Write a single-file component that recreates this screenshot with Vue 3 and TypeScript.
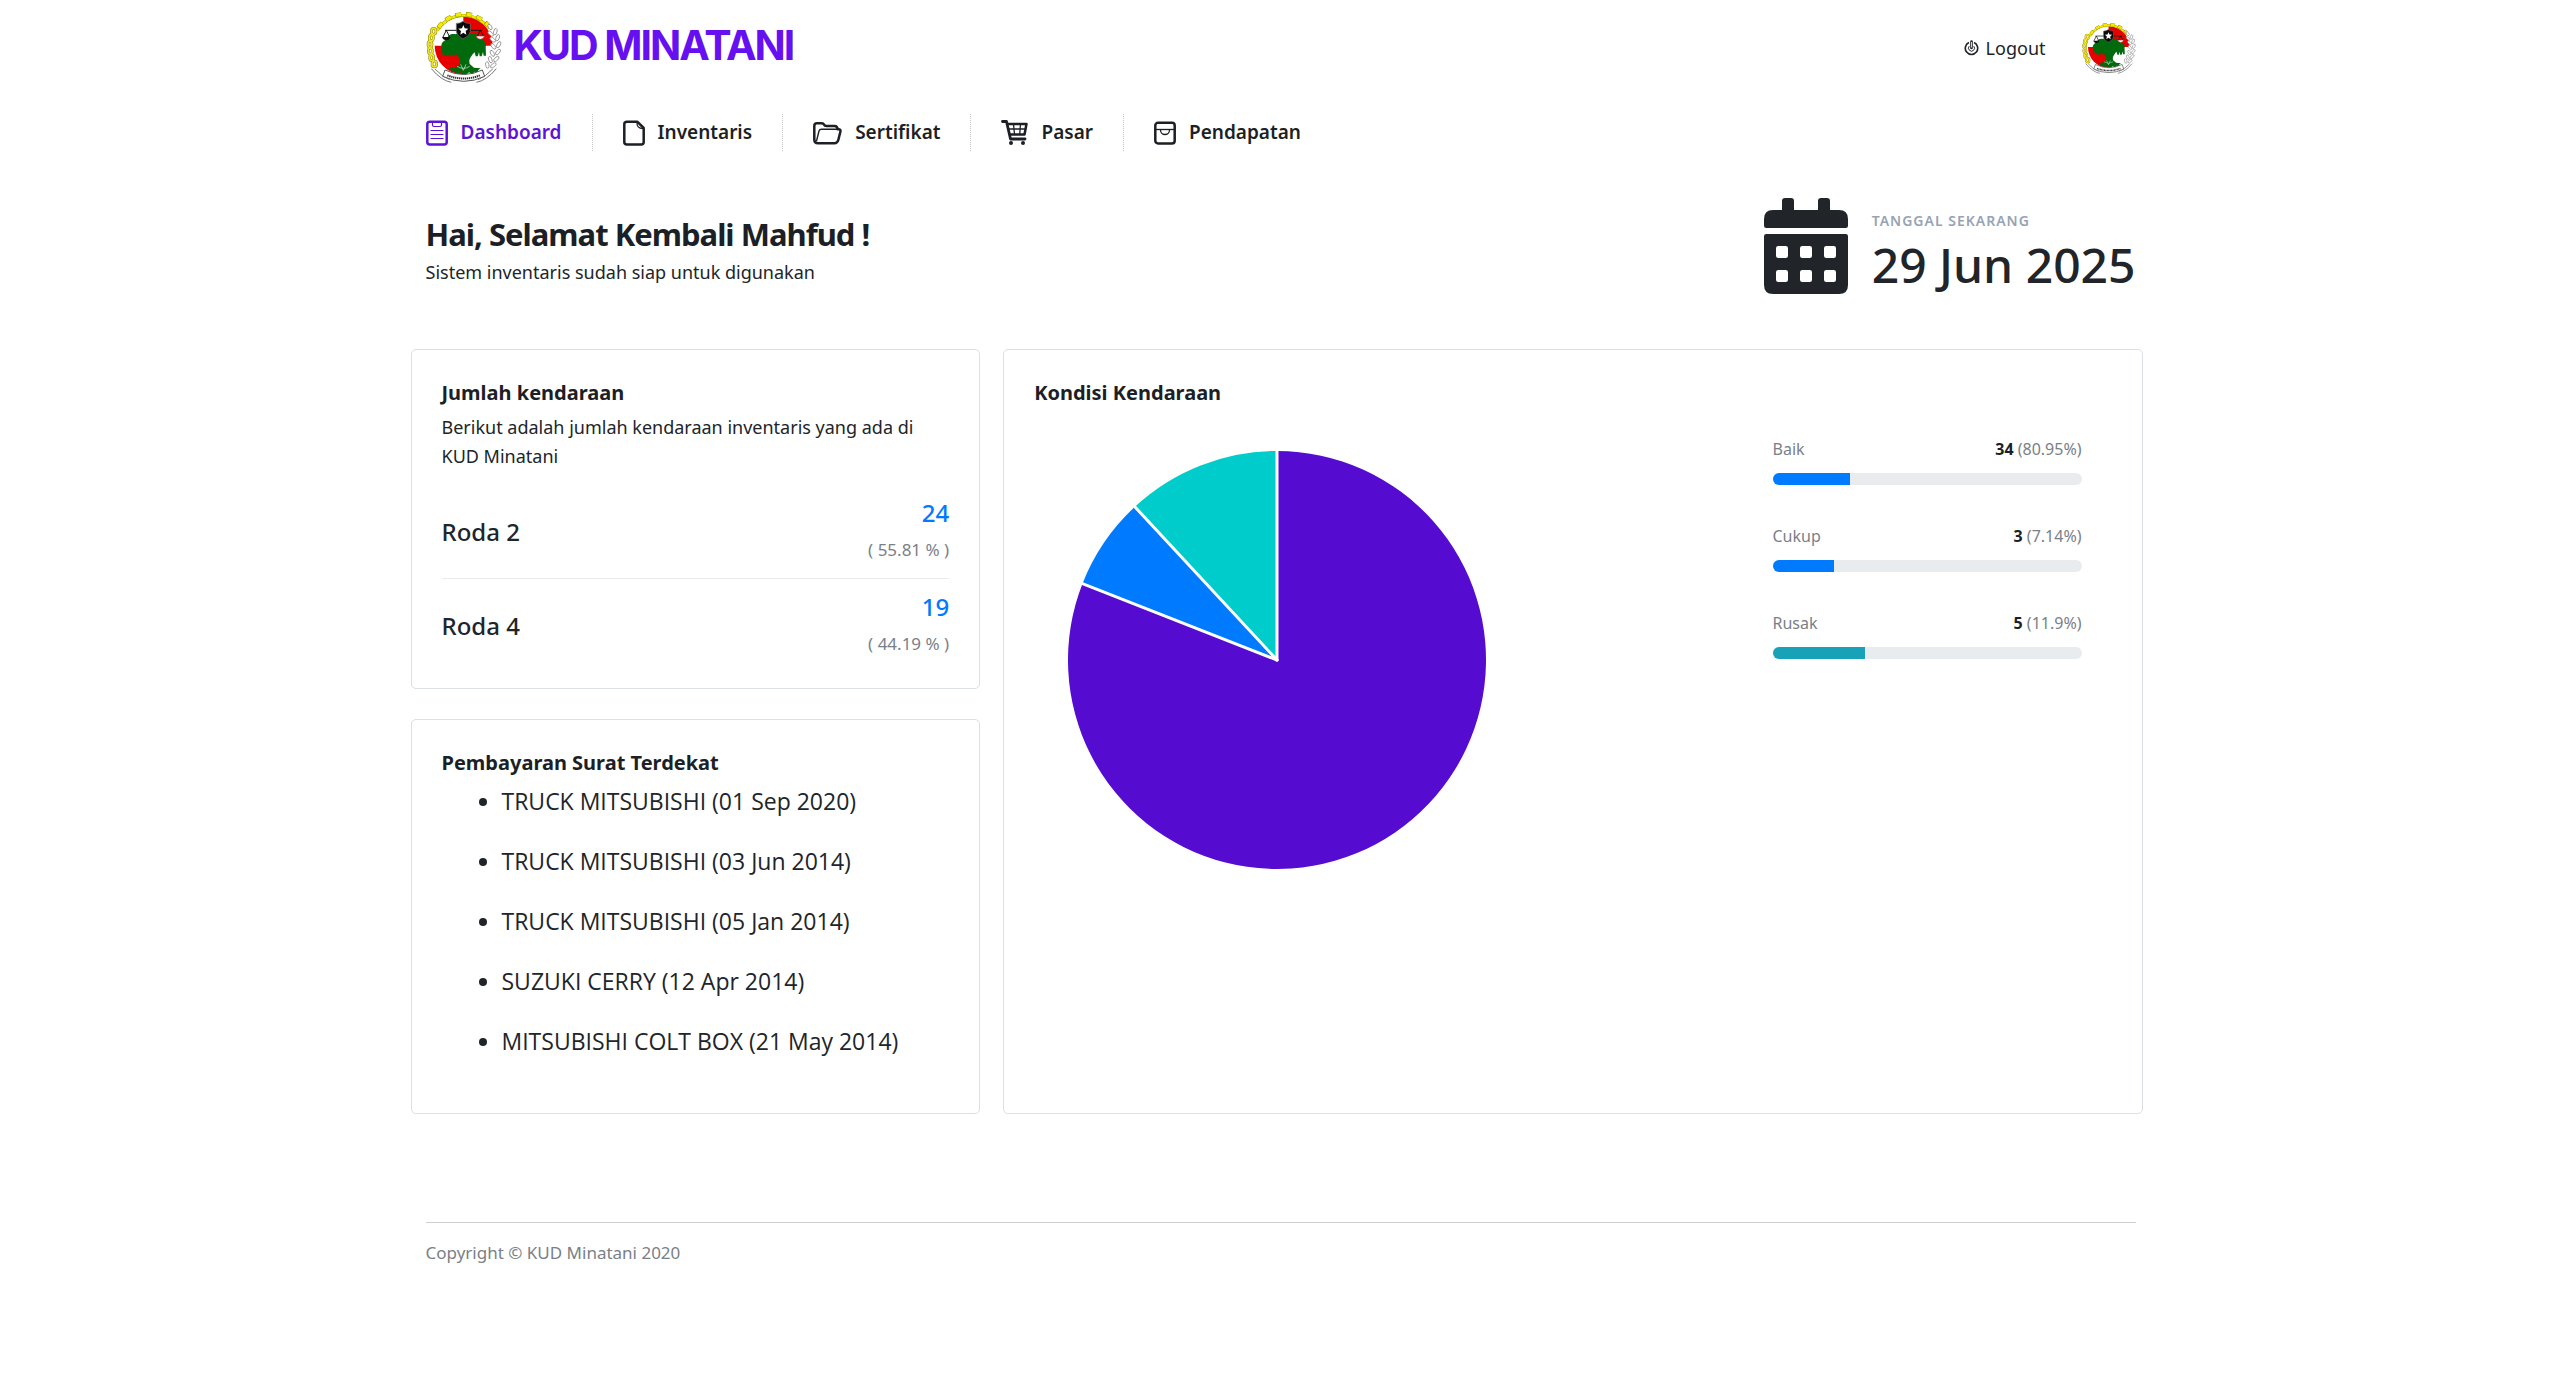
<script setup lang="ts">
interface NavItem {
  label: string
  icon: string
  width: number
  active?: boolean
}

interface Condition {
  label: string
  total: number
  percent: string
  bar: number
  barColor: string
  sliceColor: string
}

const navItems: NavItem[] = [
  { label: 'Dashboard', icon: 'clipboard', width: 22, active: true },
  { label: 'Inventaris', icon: 'document', width: 22 },
  { label: 'Sertifikat', icon: 'folder', width: 29 },
  { label: 'Pasar', icon: 'cart', width: 27 },
  { label: 'Pendapatan', icon: 'archive', width: 22 },
]

const vehicles = [
  { label: 'Roda 2', total: 24, percent: '55.81' },
  { label: 'Roda 4', total: 19, percent: '44.19' },
]

const payments: string[] = [
  'TRUCK MITSUBISHI (01 Sep 2020)',
  'TRUCK MITSUBISHI (03 Jun 2014)',
  'TRUCK MITSUBISHI (05 Jan 2014)',
  'SUZUKI CERRY (12 Apr 2014)',
  'MITSUBISHI COLT BOX (21 May 2014)',
]

const conditions: Condition[] = [
  { label: 'Baik', total: 34, percent: '80.95%', bar: 25, barColor: '#007bff', sliceColor: '#560bd0' },
  { label: 'Cukup', total: 3, percent: '7.14%', bar: 20, barColor: '#007bff', sliceColor: '#007bff' },
  { label: 'Rusak', total: 5, percent: '11.9%', bar: 30, barColor: '#17a2b8', sliceColor: '#00cccc' },
]

const radius = 209
const sum = conditions.reduce((acc, c) => acc + c.total, 0)

function point(fraction: number): string {
  const angle = fraction * Math.PI * 2
  return `${radius + radius * Math.sin(angle)} ${radius - radius * Math.cos(angle)}`
}

let start = 0
const slices = conditions.map((c) => {
  const end = start + c.total / sum
  const large = end - start > 0.5 ? 1 : 0
  const d = `M${radius} ${radius}L${point(start)}A${radius} ${radius} 0 ${large} 1 ${point(end)}Z`
  const edge = `M${radius} ${radius}L${point(start)}`
  start = end
  return { d, edge, color: c.sliceColor }
})
</script>

<template>
  <svg class="defs" aria-hidden="true">
    <symbol id="emblem" viewBox="20 18 226 216">
      <circle cx="132" cy="122" r="87" fill="#fff" />
      <path d="M131 122V35a87 87 0 0 1 88 87z" fill="#e60000" />
      <path d="M131 122H45a87 87 0 0 0 86 87z" fill="#e60000" />
      <path d="M53 76A92 92 0 0 1 207 70" fill="none" stroke="#8d8300" stroke-width="9" />
      <path d="M53 76A92 92 0 0 1 207 70" fill="none" stroke="#f4ec00" stroke-width="7" />
      <path d="M56 68A94 94 0 0 1 206 62" fill="none" stroke="#8d8300" stroke-width="13" stroke-dasharray="18 14" />
      <path d="M57 67A94 94 0 0 1 206 62" fill="none" stroke="#f4ec00" stroke-width="11" stroke-dasharray="16 16" />
      <g fill="none" stroke="#8d8300" stroke-width="8">
        <ellipse cx="42" cy="79" rx="7" ry="9" /><ellipse cx="35" cy="98" rx="6" ry="9" />
        <ellipse cx="31" cy="118" rx="6" ry="9" /><ellipse cx="32" cy="138" rx="6" ry="9" />
        <ellipse cx="36" cy="158" rx="6" ry="9" /><ellipse cx="44" cy="177" rx="7" ry="9" />
      </g>
      <g fill="none" stroke="#efe52c" stroke-width="5">
        <ellipse cx="42" cy="79" rx="7" ry="9" /><ellipse cx="35" cy="98" rx="6" ry="9" />
        <ellipse cx="31" cy="118" rx="6" ry="9" /><ellipse cx="32" cy="138" rx="6" ry="9" />
        <ellipse cx="36" cy="158" rx="6" ry="9" /><ellipse cx="44" cy="177" rx="7" ry="9" />
      </g>
      <g fill="#fff" stroke="#777" stroke-width="2">
        <ellipse cx="211" cy="66" rx="5" ry="9" transform="rotate(-30 211 66)" />
        <ellipse cx="213" cy="86" rx="5" ry="10" transform="rotate(-50 213 86)" />
        <ellipse cx="227" cy="80" rx="5" ry="10" transform="rotate(15 227 80)" />
        <ellipse cx="219" cy="104" rx="5" ry="10" transform="rotate(-50 219 104)" />
        <ellipse cx="234" cy="98" rx="5" ry="10" transform="rotate(20 234 98)" />
        <ellipse cx="221" cy="124" rx="5" ry="10" transform="rotate(-40 221 124)" />
        <ellipse cx="237" cy="119" rx="5" ry="10" transform="rotate(30 237 119)" />
        <ellipse cx="218" cy="145" rx="5" ry="10" transform="rotate(-30 218 145)" />
        <ellipse cx="235" cy="141" rx="5" ry="10" transform="rotate(40 235 141)" />
        <ellipse cx="212" cy="164" rx="5" ry="10" transform="rotate(-20 212 164)" />
        <ellipse cx="230" cy="162" rx="5" ry="10" transform="rotate(45 230 162)" />
        <ellipse cx="203" cy="180" rx="5" ry="10" transform="rotate(-10 203 180)" />
        <ellipse cx="221" cy="181" rx="5" ry="10" transform="rotate(50 221 181)" />
      </g>
      <path
        d="M66 126C62 112 76 106 82 102C84 90 96 84 108 88C120 80 144 80 156 88C170 84 182 90 184 102C194 106 202 112 198 126L199 152L192 152L190 141L186 154L180 154L178 142L174 154L168 154L165 142L160 146L152 158C148 163 149 170 150 177L163 188L183 190L175 196L177 203L165 200L158 208L148 202L136 212L123 202L113 208L105 200L93 203L96 195L87 189L109 187L120 177C122 169 121 163 118 158L108 145L105 154L99 154L96 142L93 154L87 154L84 142L81 152L75 152L72 140L68 152Z"
        fill="#006a0c"
      />
      <path d="M112 184q19 12 38 0M123 178l8 18 8-18" fill="none" stroke="#d8ead5" stroke-width="2" />
      <path d="M76 76h110M80 76l-10 20M80 76l10 20M182 76l-10 18M182 76l10 18" fill="none" stroke="#151515" stroke-width="3" />
      <path d="M67 96h26q-4 10-13 10t-13-10z" fill="#111" />
      <path d="M169 93h26q-4 10-13 10t-13-10z" fill="#fff" stroke="#b22" stroke-width="2" />
      <path d="M110 55q11 1 20-6 10 7 22 6v25q-2 14-22 22-18-8-20-22z" fill="#0b0b0b" stroke="#777" stroke-width="2" />
      <path d="M131 60l4 10 11 1-8 7 2 11-9-6-9 6 2-11-8-7 11-1z" fill="#fff" />
      <path d="M35 191q30 36 60 41M230 191q-30 36-60 41M46 192q22 24 44 32M219 192q-22 24-44 32" fill="none" stroke="#777" stroke-width="3" />
      <path d="M76 195q56 27 112 0l7 19q-62 30-126 0z" fill="#fff" stroke="#555" stroke-width="3" />
      <path d="M83 211q49 19 98 0" fill="none" stroke="#333" stroke-width="6" stroke-dasharray="4 2" />
    </symbol>
  </svg>

  <div class="page">
    <header class="header">
      <a class="brand" href="#">
        <svg class="brand-logo" aria-hidden="true"><use href="#emblem" /></svg>
        <span class="brand-name">KUD MINATANI</span>
      </a>
      <div class="account">
        <a class="logout" href="#">
          <svg width="15" height="16" viewBox="0 0 15 16" fill="none" stroke="currentColor" aria-hidden="true">
            <path d="M5 2.6a6.2 6.2 0 1 0 5 0" stroke-width="1.6" />
            <path d="M5.2 6.2a3 3 0 1 0 4.6 0" stroke-width="1" />
            <path d="M7.5 1.5V8" stroke-width="2.6" stroke-linecap="round" />
            <path d="M7.5 2V7.5" stroke="#fff" stroke-width="0.8" />
          </svg>
          Logout
        </a>
        <svg class="avatar" role="img" aria-label="Profil"><use href="#emblem" /></svg>
      </div>
    </header>

    <nav class="nav">
      <a v-for="item in navItems" :key="item.label" href="#" class="nav-item" :class="{ active: item.active }">
        <svg
          :width="item.width" height="26" :viewBox="`0 0 ${item.width} 26`" fill="none"
          stroke="currentColor" stroke-linejoin="round" aria-hidden="true"
        >
          <template v-if="item.icon === 'clipboard'">
            <rect x="1.3" y="1.8" width="19.4" height="22.6" rx="2.5" stroke-width="2.5" />
            <path d="M6.5 2v3q0 1.5 1.5 1.5h6q1.5 0 1.5-1.5V2" stroke-width="1.2" />
            <path d="M4.5 10.5h13M4.5 14.5h13M4.5 18.5h13" stroke-width="1.2" />
          </template>
          <template v-else-if="item.icon === 'document'">
            <path d="M4 1.8h10.5l6.2 6.2v13.9q0 2.5-2.5 2.5H4q-2.7 0-2.7-2.5V4.3q0-2.5 2.7-2.5z" stroke-width="2.5" />
            <path d="M14 2q-.5 6.5 6 6.5" stroke-width="1.3" />
          </template>
          <template v-else-if="item.icon === 'folder'">
            <path d="M5 23.2q-3.7 0-3.7-3.7V6q0-2.7 2.7-2.7h4.5q2 0 2.6 1.5.5 1.2 2.4 1.2h8q3 0 3 3.3h1.2q2 0 1.8 2l-2.2 8.7q-.8 3.2-4 3.2z" stroke-width="2.5" />
            <path d="M24.5 9.3H8.5q-2 0-2.5 1.7L3.5 21" stroke-width="1.4" />
          </template>
          <template v-else-if="item.icon === 'cart'">
            <path d="M1.5 1.5h4l4 17.5H24" stroke-width="2.8" stroke-linecap="round" />
            <path d="M6 4h19.5L23.5 14.5H8.5" stroke-width="2.5" />
            <path d="M7 9h17.5M12.5 4l1 10.5M19.5 4l-.8 10.5" stroke-width="1.3" />
            <circle cx="10" cy="23" r="2" fill="currentColor" stroke="none" />
            <circle cx="22" cy="23" r="2" fill="currentColor" stroke="none" />
          </template>
          <template v-else>
            <rect x="1.3" y="2.8" width="19.4" height="20.6" rx="2.7" stroke-width="2.5" />
            <path d="M1 9.5h20" stroke-width="1.3" />
            <path d="M6.5 10a4.5 4.5 0 0 0 9 0" stroke-width="1.3" />
          </template>
        </svg>
        {{ item.label }}
      </a>
    </nav>

    <section class="hero">
      <div class="welcome">
        <h1 class="greeting">Hai, Selamat Kembali Mahfud !</h1>
        <p>Sistem inventaris sudah siap untuk digunakan</p>
      </div>
      <div class="today">
        <svg class="calendar" viewBox="0 0 448 512" fill="currentColor" aria-hidden="true">
          <path d="M48 64h48V16q0-16 16-16h32q16 0 16 16v48h128V16q0-16 16-16h32q16 0 16 16v48h48q48 0 48 48v36q0 12-12 12H12q-12 0-12-12v-36q0-48 48-48z" />
          <path
            fill-rule="evenodd"
            d="M12 192h424q12 0 12 12v260q0 48-48 48H48q-48 0-48-48V204q0-12 12-12zM76 256q-12 0-12 12v40q0 12 12 12h40q12 0 12-12v-40q0-12-12-12zM204 256q-12 0-12 12v40q0 12 12 12h40q12 0 12-12v-40q0-12-12-12zM332 256q-12 0-12 12v40q0 12 12 12h40q12 0 12-12v-40q0-12-12-12zM76 384q-12 0-12 12v40q0 12 12 12h40q12 0 12-12v-40q0-12-12-12zM204 384q-12 0-12 12v40q0 12 12 12h40q12 0 12-12v-40q0-12-12-12zM332 384q-12 0-12 12v40q0 12 12 12h40q12 0 12-12v-40q0-12-12-12z"
          />
        </svg>
        <div class="today-text">
          <div class="today-label">TANGGAL SEKARANG</div>
          <div class="today-date">29 Jun 2025</div>
        </div>
      </div>
    </section>

    <main class="board">
      <div class="column">
        <section class="card card-count">
          <h2 class="card-title">Jumlah kendaraan</h2>
          <p>Berikut adalah jumlah kendaraan inventaris yang ada di KUD Minatani</p>
          <div class="counts">
            <div v-for="v in vehicles" :key="v.label" class="count">
              <span class="count-label">{{ v.label }}</span>
              <div class="count-figures">
                <div class="count-total">{{ v.total }}</div>
                <div class="count-percent">( {{ v.percent }} % )</div>
              </div>
            </div>
          </div>
        </section>

        <section class="card">
          <h2 class="card-title">Pembayaran Surat Terdekat</h2>
          <ul class="payments">
            <li v-for="p in payments" :key="p">{{ p }}</li>
          </ul>
        </section>
      </div>

      <section class="card">
        <h2 class="card-title">Kondisi Kendaraan</h2>
        <div class="condition">
          <svg class="pie" viewBox="0 0 418 418" role="img" aria-label="Kondisi Kendaraan">
            <path v-for="s in slices" :key="s.color" :d="s.d" :fill="s.color" />
            <path v-for="s in slices" :key="s.edge" :d="s.edge" stroke="#fff" stroke-width="3" stroke-linecap="round" />
          </svg>
          <div class="legend">
            <div v-for="c in conditions" :key="c.label" class="legend-item">
              <div class="legend-row">
                <span>{{ c.label }}</span>
                <span><strong>{{ c.total }}</strong> ({{ c.percent }})</span>
              </div>
              <div class="track">
                <div class="fill" :style="{ width: c.bar + '%', background: c.barColor }"></div>
              </div>
            </div>
          </div>
        </div>
      </section>
    </main>

    <footer class="footer">Copyright © KUD Minatani 2020</footer>
  </div>
</template>

<style>
body {
  background: #fff;
}
</style>

<style scoped>
.defs {
  display: block;
  width: 0;
  height: 0;
}

.page {
  box-sizing: border-box;
  max-width: 1732px;
  margin: 0 auto;
  color: #212529;
  font-family: "Noto Sans", "Open Sans", sans-serif;
  font-size: 18px;
  line-height: 29px;
}

a {
  color: inherit;
  text-decoration: none;
}

h1,
h2,
p,
ul {
  margin: 0;
}

.header {
  display: flex;
  align-items: center;
  justify-content: space-between;
  height: 96px;
  padding: 0 11px;
}

.brand {
  display: flex;
  align-items: center;
  gap: 12px;
  padding-bottom: 2px;
}

.brand-logo {
  width: 76px;
  height: 72px;
}

.brand-name {
  padding-bottom: 4px;
  color: #6610f2;
  font-family: Inter, sans-serif;
  font-size: 41px;
  font-weight: 700;
  line-height: 48px;
  letter-spacing: -2px;
}

.account {
  display: flex;
  align-items: center;
  gap: 36px;
}

.logout {
  display: flex;
  align-items: center;
  gap: 7px;
}

.avatar {
  width: 54px;
  height: 54px;
}

.nav {
  display: flex;
  flex-wrap: wrap;
  margin-top: 18px;
  padding: 0 11px;
}

.nav-item {
  display: flex;
  align-items: center;
  gap: 13px;
  height: 37px;
  padding: 0 30px;
  border-right: 1px dotted #c4c4c4;
  color: #1c1f26;
  font-size: 19px;
  font-weight: 600;
}

.nav-item:first-child {
  padding-left: 0;
}

.nav-item:last-child {
  border-right: 0;
}

.nav-item.active {
  color: #5b14d6;
}

.hero {
  display: flex;
  align-items: center;
  justify-content: space-between;
  padding: 47px 11px 52px;
}

.welcome {
  padding-top: 2px;
}

.greeting {
  font-size: 31px;
  font-weight: 700;
  line-height: 48px;
  letter-spacing: -1px;
  color: #1c1f26;
}

.today {
  display: flex;
  align-items: flex-start;
  gap: 24px;
}

.calendar {
  width: 84px;
  height: 96px;
}

.today-text {
  padding-top: 11px;
}

.today-label {
  color: #97a3b4;
  font-size: 14px;
  font-weight: 600;
  line-height: 24px;
  letter-spacing: 1px;
}

.today-date {
  font-size: 48px;
  font-weight: 500;
  line-height: 64px;
}

.board {
  display: grid;
  grid-template-columns: minmax(0, 1fr) minmax(0, 2fr);
  gap: 23px;
  margin: 0 4px 0 -4px;
}

.column {
  display: flex;
  flex-direction: column;
  gap: 30px;
}

.card {
  box-sizing: border-box;
  padding: 30px;
  border: 1px solid #dcdfe3;
  border-radius: 5px;
}

.card-count {
  padding-bottom: 16px;
}

.card-title {
  margin-bottom: 7px;
  color: #1c1f26;
  font-size: 20px;
  font-weight: 700;
  line-height: 26px;
}

.counts {
  margin-top: 14px;
}

.count {
  display: flex;
  align-items: center;
  justify-content: space-between;
  padding: 9px 0 10px;
}

.count + .count {
  border-top: 1px solid #e9ebee;
}

.count-label,
.count-total {
  font-size: 24px;
  font-weight: 500;
  line-height: 37px;
}

.count-figures {
  text-align: right;
}

.count-total {
  color: #007bff;
}

.count-percent {
  color: #7a8088;
  font-size: 17px;
  line-height: 37px;
}

.payments {
  padding-left: 60px;
  font-family: "Open Sans", "Noto Sans", sans-serif;
  font-size: 23px;
  line-height: 36px;
}

.payments li {
  margin-bottom: 24px;
}

.condition {
  display: flex;
  align-items: flex-start;
  justify-content: space-between;
  padding: 22px 30px 0 34px;
}

.pie {
  width: 418px;
  height: 418px;
  margin-top: 16px;
}

.legend {
  width: 309px;
}

.legend-item {
  margin-bottom: 37px;
}

.legend-row {
  display: flex;
  justify-content: space-between;
  margin-bottom: 10px;
  color: #7a8088;
  font-size: 16px;
  line-height: 28px;
}

.legend-row strong {
  color: #1c1f26;
}

.track {
  height: 12px;
  overflow: hidden;
  border-radius: 6px;
  background: #e9ecef;
}

.fill {
  height: 100%;
}

.footer {
  margin: 108px 11px 0;
  padding-top: 15px;
  border-top: 1px solid #cfcfd1;
  color: #7a8088;
  font-size: 17px;
}
</style>
